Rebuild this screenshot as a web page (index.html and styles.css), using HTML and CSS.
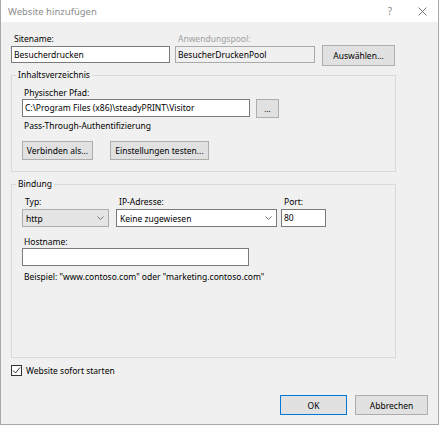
FILE: index.html
```html
<!DOCTYPE html>
<html lang="de">
<head>
<meta charset="utf-8">
<title>Website hinzufügen</title>
<link rel="stylesheet" href="styles.css">
</head>
<body>
<div class="window">
  <div class="titlebar">
    <span class="title">Website hinzufügen</span>
    <span class="help">?</span>
    <span class="close"><svg width="9" height="9" viewBox="0 0 9 9"><path d="M0.5 0.5L8.5 8.5M8.5 0.5L0.5 8.5" stroke="#6a6a6a" stroke-width="0.9" fill="none"/></svg></span>
  </div>
  <div class="content">
    <div class="row-top">
      <div class="field f-site">
        <div class="lbl">Sitename:</div>
        <div class="input">Besucherdrucken</div>
      </div>
      <div class="field f-pool">
        <div class="lbl disabled">Anwendungspool:</div>
        <div class="input readonly">BesucherDruckenPool</div>
      </div>
      <div class="btn btn-select">Auswählen...</div>
    </div>

    <fieldset class="group g-content">
      <legend>Inhaltsverzeichnis</legend>
      <div class="gbody gbody-1">
        <div class="lbl lbl-s">Physischer Pfad:</div>
        <div class="path-row">
          <div class="input input-path">C:\Program Files (x86)\steadyPRINT\Visitor</div>
          <div class="btn btn-dots">...</div>
        </div>
        <div class="text-line">Pass-Through-Authentifizierung</div>
        <div class="btn-row">
          <div class="btn btn-connect">Verbinden als...</div>
          <div class="btn btn-test">Einstellungen testen...</div>
        </div>
      </div>
    </fieldset>

    <fieldset class="group g-bind">
      <legend>Bindung</legend>
      <div class="gbody gbody-2">
        <div class="bind-row">
          <div class="field f-type">
            <div class="lbl">Typ:</div>
            <div class="select select-grey"><span>http</span><svg class="chev" width="7" height="4" viewBox="0 0 7 4"><path d="M0.5 0.5L3.5 3.5L6.5 0.5" stroke="#666" stroke-width="0.9" fill="none"/></svg></div>
          </div>
          <div class="field f-ip">
            <div class="lbl">IP-Adresse:</div>
            <div class="select"><span>Keine zugewiesen</span><svg class="chev" width="7" height="4" viewBox="0 0 7 4"><path d="M0.5 0.5L3.5 3.5L6.5 0.5" stroke="#666" stroke-width="0.9" fill="none"/></svg></div>
          </div>
          <div class="field f-port">
            <div class="lbl">Port:</div>
            <div class="input input-tall">80</div>
          </div>
        </div>
        <div class="lbl lbl-s host-lbl">Hostname:</div>
        <div class="input input-tall input-host"></div>
        <div class="text-line example">Beispiel: "www.contoso.com" oder "marketing.contoso.com"</div>
      </div>
    </fieldset>

    <div class="check-row">
      <span class="checkbox"><svg width="9" height="9" viewBox="0 0 9 9"><path d="M1 4.5L3.5 7L8 1.5" stroke="#333" stroke-width="1" fill="none"/></svg></span>
      <span>Website sofort starten</span>
    </div>

    <div class="footer">
      <div class="btn btn-ok">OK</div>
      <div class="btn btn-cancel">Abbrechen</div>
    </div>
  </div>
</div>
</body>
</html>
```

FILE: styles.css
```css
* {
  box-sizing: border-box;
}

body {
  margin: 0;
  background: #ffffff;
  font-family: "Noto Sans", "DejaVu Sans", sans-serif;
  font-size: 8.5px;
  color: #000;
}

.window {
  width: 439px;
  height: 425px;
  background: #f0f0f0;
  border: 1px solid #a8a8a8;
  border-top: none;
  display: flex;
  flex-direction: column;
}

.titlebar {
  height: 22px;
  background: #ffffff;
  display: flex;
  align-items: center;
  padding-left: 7px;
}

.title {
  flex: 1;
  color: #8c8c8c;
  font-size: 9.5px;
}

.help {
  color: #8c8c8c;
  font-size: 10px;
  margin-right: 26px;
}

.close {
  width: 9px;
  height: 9px;
  margin-right: 11px;
  display: flex;
}

.content {
  flex: 1;
  display: flex;
  flex-direction: column;
  padding: 10px 10px 9px 10px;
}

.row-top {
  display: flex;
  align-items: flex-start;
}

.lbl {
  height: 14px;
  line-height: 14px;
  padding-left: 3px;
  white-space: nowrap;
}

.lbl-s {
  height: 13px;
  line-height: 13px;
  padding-left: 2px;
}

.disabled {
  color: #a0a0a0;
}

.input {
  height: 17px;
  line-height: 15px;
  border: 1px solid #7a7a7a;
  background: #ffffff;
  padding-left: 2px;
  white-space: nowrap;
  overflow: hidden;
}

.input.readonly {
  background: #f0f0f0;
  border-color: #a9a9a9;
}

.f-site {
  width: 159px;
}

.f-pool {
  width: 140px;
  margin-left: 5px;
}

.btn {
  background: #e1e1e1;
  border: 1px solid #adadad;
  display: flex;
  align-items: center;
  justify-content: center;
  white-space: nowrap;
}

.btn-select {
  width: 73px;
  height: 21px;
  margin-left: 7px;
  margin-top: 13px;
}

.group {
  margin: 0;
  padding: 0;
  border: 1px solid #dadada;
  width: 385px;
  min-inline-size: 0;
}

.group legend {
  margin-left: 4px;
  padding: 0 2px;
  line-height: 14px;
  height: 14px;
}

.g-content {
  margin-top: 2px;
}

.gbody-1 {
  padding: 4px 0 11px 10px;
}

.path-row {
  display: flex;
  align-items: flex-start;
}

.input-path {
  width: 228px;
  height: 18px;
  line-height: 16px;
}

.btn-dots {
  width: 23px;
  height: 19px;
  margin-left: 6px;
  font-size: 8px;
}

.text-line {
  height: 14px;
  line-height: 14px;
  padding-left: 2px;
  margin-top: 1px;
  white-space: nowrap;
}

.btn-row {
  display: flex;
  margin-top: 8px;
}

.btn-connect {
  width: 71px;
  height: 19px;
}

.btn-test {
  width: 99px;
  height: 19px;
  margin-left: 17px;
}

.g-bind {
  margin-top: 5px;
  height: 181px;
}

.gbody-2 {
  padding: 4px 0 0 10px;
}

.bind-row {
  display: flex;
}

.f-type {
  width: 87px;
}

.f-ip {
  width: 161px;
  margin-left: 7px;
}

.f-port {
  width: 45px;
  margin-left: 4px;
}

.select {
  height: 18px;
  border: 1px solid #7a7a7a;
  background: #ffffff;
  display: flex;
  align-items: center;
  justify-content: space-between;
  padding: 0 4px 0 3px;
  white-space: nowrap;
}

.select-grey {
  background: #e5e5e5;
  border-color: #adadad;
}

.chev {
  display: block;
}

.input-tall {
  height: 18px;
  line-height: 16px;
}

.host-lbl {
  margin-top: 8px;
}

.input-host {
  width: 227px;
}

.example {
  margin-top: 4px;
}

.check-row {
  display: flex;
  align-items: center;
  height: 14px;
  margin-top: 5px;
}

.checkbox {
  width: 11px;
  height: 11px;
  border: 1px solid #333;
  background: #ffffff;
  display: flex;
  align-items: center;
  justify-content: center;
  margin-right: 4px;
}

.footer {
  margin-top: auto;
  display: flex;
  justify-content: flex-end;
}

.btn-ok {
  width: 67px;
  height: 20px;
  border-color: #0078d7;
}

.btn-cancel {
  width: 73px;
  height: 20px;
  margin-left: 8px;
}
```
